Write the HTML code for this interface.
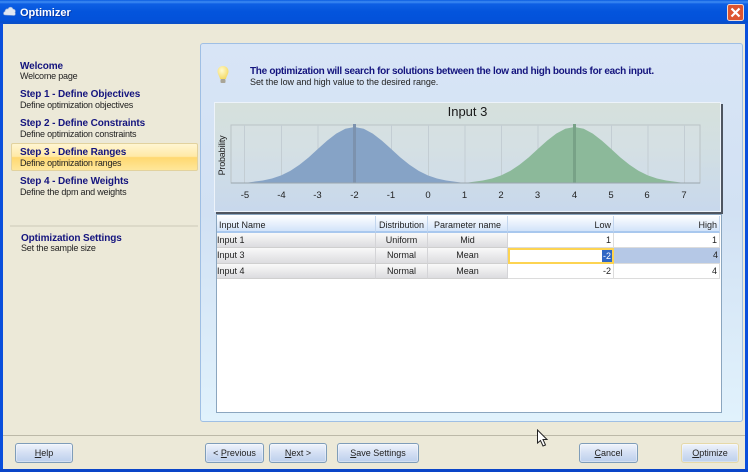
<!DOCTYPE html>
<html><head><meta charset="utf-8"><style>
*{box-sizing:border-box}
html,body{margin:0;padding:0;width:748px;height:472px;overflow:hidden;background:#ece9d8}
body{position:relative;font-family:"Liberation Sans",sans-serif;font-size:9px;color:#1a1a1a}
.a{position:absolute;white-space:nowrap}
.t{position:absolute;white-space:nowrap;font-weight:bold;font-size:10px;color:#14147e;line-height:12px;letter-spacing:-.1px}
.s{position:absolute;white-space:nowrap;font-size:9px;line-height:12px;color:#222;letter-spacing:-.2px}
.btn{position:absolute;top:443px;height:20px;border:1px solid #7f9db9;border-radius:3px;background:linear-gradient(#f0f4fc,#d6e1f4 45%,#bccfec);text-align:center;line-height:19px;font-size:9px;color:#222;box-shadow:inset 0 0 0 1px rgba(255,255,255,.35)}
.btn u{text-decoration:underline}
.h{position:absolute;top:216px;height:17px;background:linear-gradient(#fdfeff,#d2e3f9);border-bottom:2px solid #a9c8ee;border-right:1px solid #c3d6ee;font-size:9px;line-height:16px;padding:1px 2px 0;color:#222;white-space:nowrap}
.r{position:absolute;height:15.3px;background:linear-gradient(#f9f9f9,#dcdcdf);border-bottom:1px solid #cfcfcf;border-right:1px solid #d4d4d7;font-size:9px;line-height:15px;text-align:center;color:#222;white-space:nowrap}
.c{position:absolute;height:15.3px;background:#fff;border-bottom:1px solid #dcdcdc;border-right:1px solid #dcdcdc;font-size:9px;line-height:15px;text-align:right;padding-right:2px;color:#222}
</style></head><body>
<!-- title bar -->
<div class="a" style="left:0;top:0;width:748px;height:24px;background:linear-gradient(#0a5be0 0,#3f8cf3 2px,#0e5fe4 4px,#0354dc 12px,#0352da 20px,#0a4fc8 23px)"></div>
<div class="a" style="left:0;top:23px;width:3px;height:449px;background:#0a4fdc"></div>
<div class="a" style="right:0;top:23px;width:3px;height:449px;background:#0a4fdc"></div>
<div class="a" style="left:0;top:469px;width:748px;height:3px;background:#0a45c8"></div>
<svg class="a" style="left:3px;top:5px" width="14" height="13" viewBox="0 0 14 13"><path d="M2 10C0 10 0 7 2 6.500C2 4 4 3.500 5 4C6 1.500 9 1.500 10 4C12 4 13 6 12 7.500C13 9 12 10.500 11 10.500Z" fill="#dfe6f2" stroke="#8aa5d6" stroke-width=".6"/></svg>
<div class="a" style="left:20px;top:6px;font-weight:bold;font-size:11px;line-height:15px;color:#fff;text-shadow:1px 1px 0 #0a3aa8">Optimizer</div>
<svg class="a" style="left:727px;top:4px" width="17" height="17" viewBox="0 0 17 17"><rect x=".5" y=".5" width="16" height="16" rx="2" fill="#dd5530" stroke="#f4d8cc"/><path d="M4.500 4.500L12.500 12.500M12.500 4.500L4.500 12.500" stroke="#fff" stroke-width="2.200"/></svg>

<!-- sidebar -->
<div class="t" style="left:20px;top:61px">Welcome</div><div class="s" style="left:20px;top:70px">Welcome page</div>
<div class="t" style="left:20px;top:89px">Step 1 - Define Objectives</div><div class="s" style="left:20px;top:99px">Define optimization objectives</div>
<div class="t" style="left:20px;top:118px">Step 2 - Define Constraints</div><div class="s" style="left:20px;top:128px">Define optimization constraints</div>
<div class="a" style="left:11px;top:143px;width:187px;height:28px;border:1px solid #e2d29e;border-radius:2px;background:linear-gradient(#fff6d2,#ffe9a6 48%,#ffd870 52%,#ffe79a)"></div>
<div class="t" style="left:20px;top:147px">Step 3 - Define Ranges</div><div class="s" style="left:20px;top:157px">Define optimization ranges</div>
<div class="t" style="left:20px;top:176px">Step 4 - Define Weights</div><div class="s" style="left:20px;top:186px">Define the dpm and weights</div>
<div class="a" style="left:10px;top:225px;width:188px;height:2px;background:#dcd9c8"></div>
<div class="t" style="left:21px;top:233px">Optimization Settings</div><div class="s" style="left:21px;top:242px">Set the sample size</div>

<!-- panel -->
<div class="a" style="left:200px;top:43px;width:543px;height:379px;border:1px solid #9fbfe4;border-radius:3px;background:linear-gradient(#d8e5f6,#d2e1f3 45%,#d6e6f6 60%,#e1f2fc)"></div>
<svg class="a" style="left:215px;top:64px" width="16" height="22" viewBox="0 0 16 22"><defs><radialGradient id="b" cx=".4" cy=".35" r=".7"><stop offset="0" stop-color="#fffbd0"/><stop offset="1" stop-color="#f4d860"/></radialGradient></defs><path d="M8 2C4.500 2 2.500 4.500 2.500 7.500C2.500 10 4.500 12 5 15H11C11.500 12 13.500 10 13.500 7.500C13.500 4.500 11.500 2 8 2Z" fill="url(#b)"/><rect x="5.500" y="15" width="5" height="4" rx="1" fill="#a9a596"/></svg>
<div class="t" style="left:250px;top:66px;letter-spacing:-.31px">The optimization will search for solutions between the low and high bounds for each input.</div>
<div class="s" style="left:250px;top:76px;letter-spacing:-.05px">Set the low and high value to the desired range.</div>

<!-- chart -->
<div class="a" style="left:214px;top:102px;width:507px;height:110px;border:1px solid #edf3fa;background:linear-gradient(#d6e0dc,#d2dfe2 40%,#c8d8ec);box-shadow:2px 2px 0 #4e5560"></div>
<div class="a" style="left:214px;top:104px;width:507px;text-align:center;font-size:13px;line-height:16px;color:#1a1a1a">Input 3</div>
<svg class="a" style="left:0;top:0" width="748" height="472" viewBox="0 0 748 472">
<defs><path id="g" d="M-110 0L-100.800-1.300L-91.700-2.500L-82.500-4.500L-73.300-7.600L-64.200-12.100L-55-18.200L-45.800-25.600L-36.700-34L-27.500-42.300L-18.300-49.400L-9.200-54.300L0-56L9.200-54.300L18.300-49.400L27.500-42.300L36.700-34L45.800-25.600L55-18.200L64.200-12.100L73.300-7.600L82.500-4.500L91.700-2.500L100.800-1.300L110 0Z"/></defs>
<rect x="231" y="125" width="469" height="58" fill="#dfe7ea" fill-opacity=".2" stroke="#bac3c6" stroke-width="1"/>
<g stroke="#c3cdd3" stroke-width="1">
<path d="M244.500 125V183M281.500 125V183M318 125V183M391.500 125V183M428.500 125V183M465 125V183M501.500 125V183M538 125V183M611.500 125V183M648 125V183M684.500 125V183"/>
</g>
<use href="#g" transform="translate(354.500 183)" fill="#86a3c6"/>
<use href="#g" transform="translate(574.500 183)" fill="#8cb99a"/>
<rect x="353" y="124" width="3" height="59" fill="#7c92ae"/>
<rect x="573" y="124" width="3" height="59" fill="#78a287"/>
<path d="M231 183H700" stroke="#9aa5ad"/>
<g font-family="Liberation Sans, sans-serif" font-size="9.500" fill="#222" text-anchor="middle">
<text x="245" y="198">-5</text><text x="281.500" y="198">-4</text><text x="317.500" y="198">-3</text><text x="354.500" y="198">-2</text><text x="391" y="198">-1</text><text x="428" y="198">0</text><text x="464.500" y="198">1</text><text x="501" y="198">2</text><text x="537.500" y="198">3</text><text x="574.500" y="198">4</text><text x="611" y="198">5</text><text x="647" y="198">6</text><text x="684" y="198">7</text>
<text transform="translate(225 155.500) rotate(-90)" font-size="9" letter-spacing="-.2">Probability</text>
</g>
</svg>

<!-- grid -->
<div class="a" style="left:216px;top:214px;width:506px;height:199px;background:#fff;border:1px solid #8ba6bf"></div>
<div class="h" style="left:217px;width:159px">Input Name</div>
<div class="h" style="left:376px;width:52px;text-align:center">Distribution</div>
<div class="h" style="left:428px;width:80px;text-align:center">Parameter name</div>
<div class="h" style="left:508px;width:106px;text-align:right">Low</div>
<div class="h" style="left:614px;width:106px;text-align:right">High</div>

<div class="r" style="left:217px;top:233px;width:159px;text-align:left">Input 1</div>
<div class="r" style="left:376px;top:233px;width:52px">Uniform</div>
<div class="r" style="left:428px;top:233px;width:80px">Mid</div>
<div class="c" style="left:508px;top:233px;width:106px">1</div>
<div class="c" style="left:614px;top:233px;width:106px">1</div>

<div class="r" style="left:217px;top:248.300px;width:159px;text-align:left">Input 3</div>
<div class="r" style="left:376px;top:248.300px;width:52px">Normal</div>
<div class="r" style="left:428px;top:248.300px;width:80px">Mean</div>
<div class="c" style="left:508px;top:248.300px;width:106px;border:2px solid #fdd452;line-height:11px;padding-right:0"><span style="background:#2f66c4;color:#fff;display:inline-block;height:12px;line-height:12px;padding:0 1px">-2</span></div>
<div class="c" style="left:614px;top:248.300px;width:106px;background:#b5c8e6;border-right:0">4</div>

<div class="r" style="left:217px;top:263.600px;width:159px;text-align:left">Input 4</div>
<div class="r" style="left:376px;top:263.600px;width:52px">Normal</div>
<div class="r" style="left:428px;top:263.600px;width:80px">Mean</div>
<div class="c" style="left:508px;top:263.600px;width:106px">-2</div>
<div class="c" style="left:614px;top:263.600px;width:106px">4</div>

<!-- footer -->
<div class="a" style="left:3px;top:435px;width:742px;height:1px;background:#bcb9a8"></div>
<div class="btn" style="left:15px;width:58px"><u>H</u>elp</div>
<div class="btn" style="left:205px;width:59px">&lt; <u>P</u>revious</div>
<div class="btn" style="left:269px;width:58px"><u>N</u>ext &gt;</div>
<div class="btn" style="left:337px;width:82px"><u>S</u>ave Settings</div>
<div class="btn" style="left:579px;width:59px"><u>C</u>ancel</div>
<div class="btn" style="left:681px;width:58px;border-color:#e6d9a8"><u>O</u>ptimize</div>
<svg class="a" style="left:536px;top:429px" width="14" height="19" viewBox="0 0 14 19"><path d="M1.500 1V14L4.500 11.500L7 17L9.500 16L7 10.500H11Z" fill="#fff" stroke="#222" stroke-width="1"/></svg>
</body></html>
